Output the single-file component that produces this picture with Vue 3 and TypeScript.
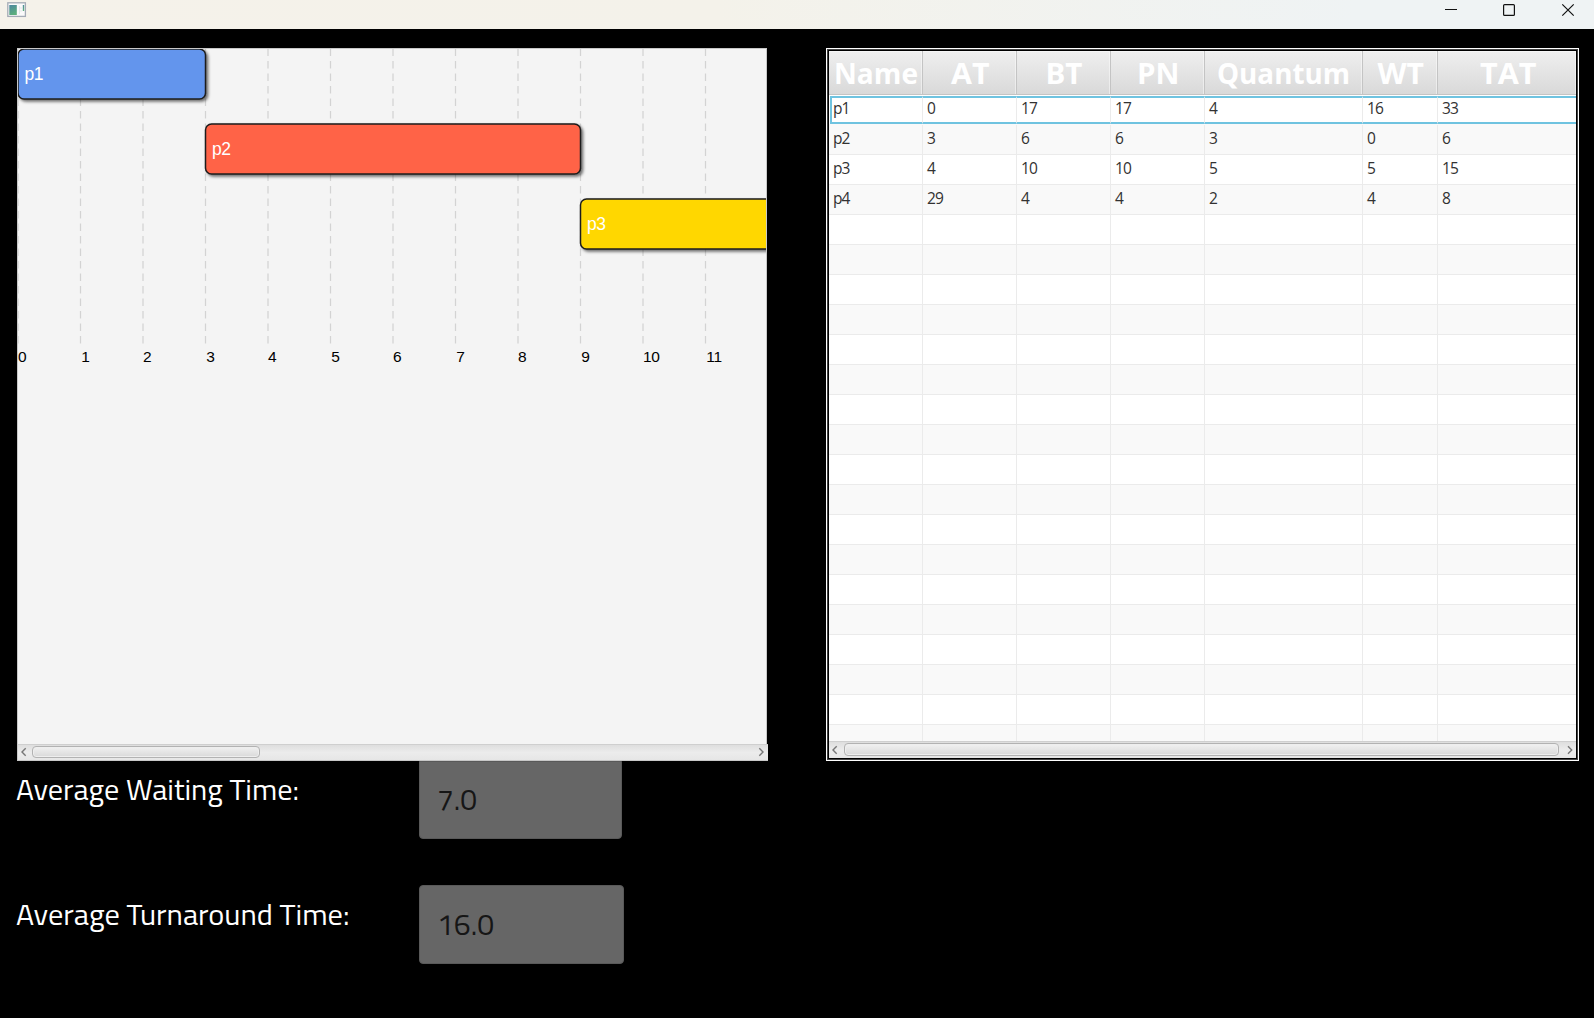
<script setup lang="ts">
interface Bar { name: string; start: number; length: number; color: string }
interface Column { title: string; width: number; textX: number; textWidth: number }

const unit = 62.5
const ticks = Array.from({ length: 12 }, (_, i) => i)
const bars: Bar[] = [
  { name: 'p1', start: 0, length: 3, color: '#6495ed' },
  { name: 'p2', start: 3, length: 6, color: '#ff6347' },
  { name: 'p3', start: 9, length: 10, color: '#ffd700' },
]

const columns: Column[] = [
  { title: 'Name', width: 94, textX: 5, textWidth: 84 },
  { title: 'AT', width: 94, textX: 28, textWidth: 38.5 },
  { title: 'BT', width: 94, textX: 28.5, textWidth: 37 },
  { title: 'PN', width: 94, textX: 26, textWidth: 42.5 },
  { title: 'Quantum', width: 158, textX: 12, textWidth: 133 },
  { title: 'WT', width: 75, textX: 14.5, textWidth: 46.5 },
  { title: 'TAT', width: 138, textX: 42, textWidth: 56.5 },
]
const gridColumns = columns.map((c) => c.width + 'px').join(' ')

const processes: (string | number)[][] = [
  ['p1', 0, 17, 17, 4, 16, 33],
  ['p2', 3, 6, 6, 3, 0, 6],
  ['p3', 4, 10, 10, 5, 5, 15],
  ['p4', 29, 4, 4, 2, 4, 8],
]
const rows = Array.from({ length: 22 }, (_, i) => processes[i] ?? columns.map(() => ''))

const averages = [
  { label: 'Average Waiting Time:', labelWidth: 283, labelY: 39, value: '7.0', valueWidth: 40, valueY: 48, kind: 'waiting' },
  { label: 'Average Turnaround Time:', labelWidth: 333.5, labelY: 40, value: '16.0', valueWidth: 57, valueY: 49, kind: 'turnaround' },
]
</script>

<template>
  <div class="window">
    <header class="titlebar">
      <svg class="app-icon" width="20" height="17" viewBox="0 0 20 17">
        <defs>
          <linearGradient id="screen" x1="0" y1="0" x2="0.4" y2="1">
            <stop offset="0" stop-color="#4c86a0" />
            <stop offset="1" stop-color="#5cae7c" />
          </linearGradient>
        </defs>
        <rect x="0.8" y="0.8" width="17.6" height="13.6" fill="#fafafa" stroke="#a4abb5" stroke-width="1.3" />
        <rect x="2.3" y="3" width="7.5" height="10" fill="url(#screen)" />
        <path d="M12.5 4v8M12 6h3M12 9h3" stroke="#e5e9ec" fill="none" />
        <rect x="15.8" y="3" width="1.4" height="6" fill="url(#screen)" />
      </svg>
      <svg class="controls" width="130" height="20" viewBox="0 0 130 20" fill="none" stroke="#111">
        <path d="M0 9.5h12" />
        <rect x="58.6" y="4.6" width="10.8" height="10.8" rx="1" stroke-width="1.2" />
        <path d="M117.3 4.3l11.4 11.4M128.7 4.3l-11.4 11.4" stroke-width="1.2" />
      </svg>
    </header>

    <main class="content">
      <section class="left">
        <div class="chart-pane">
          <svg class="chart" width="748" height="695" viewBox="0 0 748 695">
            <defs>
              <filter id="drop" x="-5%" y="-20%" width="110%" height="150%">
                <feDropShadow dx="2" dy="2" stdDeviation="1.5" flood-color="#000" flood-opacity="0.55" />
              </filter>
            </defs>
            <g class="gridlines">
              <line v-for="t in ticks" :key="t" :x1="t * unit" y1="0" :x2="t * unit" y2="294" />
            </g>
            <g class="tick-labels">
              <text v-for="t in ticks" :key="t" :x="t * unit + (t % 2 ? 0.8 : 0)" y="313">{{ t }}</text>
            </g>
            <g v-for="(b, i) in bars" :key="b.name">
              <rect
                :x="b.start * unit" :y="i * 75" :width="b.length * unit" height="50" rx="6"
                :fill="b.color" stroke="#1c1c1c" stroke-width="1.5" filter="url(#drop)"
              />
              <text class="bar-label" :x="b.start * unit + 6.5" :y="i * 75 + 31">{{ b.name }}</text>
            </g>
          </svg>
          <div class="scrollbar chart-scroll">
            <svg width="16" height="16" viewBox="0 0 16 16"><path d="M7.7 3.3L4 7l3.7 3.7" /></svg>
            <div class="thumb short"></div>
            <svg width="16" height="16" viewBox="0 0 16 16"><path d="M7.3 3.3L11 7l-3.7 3.7" /></svg>
          </div>
        </div>

        <div v-for="a in averages" :key="a.kind" class="average" :class="a.kind">
          <svg class="caption" width="402" height="78">
            <text x="-1" :y="a.labelY" :textLength="a.labelWidth" lengthAdjust="spacingAndGlyphs">{{ a.label }}</text>
          </svg>
          <div class="field">
            <svg width="100" height="76">
              <text x="0" :y="a.valueY" :textLength="a.valueWidth" lengthAdjust="spacingAndGlyphs">{{ a.value }}</text>
            </svg>
          </div>
        </div>
      </section>

      <section class="table">
        <div class="thead" :style="{ gridTemplateColumns: gridColumns }">
          <div v-for="c in columns" :key="c.title" class="th">
            <svg :width="c.width - 1" height="43">
              <text :x="c.textX" y="33" :textLength="c.textWidth" lengthAdjust="spacingAndGlyphs">{{ c.title }}</text>
            </svg>
          </div>
        </div>
        <div class="tbody">
          <div
            v-for="(r, i) in rows" :key="i" class="tr" :class="{ focused: i === 0, odd: i % 2 === 1 }"
            :style="{ gridTemplateColumns: gridColumns }"
          >
            <div v-for="(v, j) in r" :key="j" class="td">{{ v }}</div>
          </div>
        </div>
        <div class="scrollbar table-scroll">
          <svg width="15" height="16" viewBox="0 0 15 16"><path d="M7.7 4.3L4 8l3.7 3.7" /></svg>
          <div class="thumb"></div>
          <svg width="17" height="16" viewBox="0 0 17 16"><path d="M9 4.3L12.7 8 9 11.7" /></svg>
        </div>
      </section>
    </main>
  </div>
</template>

<style>
body { background: #000; overflow: hidden; }
</style>

<style scoped>
.window {
  width: 1594px;
  height: 1018px;
  background: #000;
  overflow: hidden;
}
.titlebar {
  box-sizing: border-box;
  display: flex;
  justify-content: space-between;
  height: 29px;
  padding: 0 19px 0 7px;
  background: linear-gradient(90deg, #f5f2ea 0%, #f4f2ea 45%, #eff3f4 85%, #eff3f4 100%);
}
.app-icon { margin-top: 2px; }
.content {
  display: flex;
  gap: 58px;
  padding: 19px 0 0 17px;
}
.left { width: 751px; }
.chart-pane {
  width: 750px;
  height: 713px;
}
.chart {
  display: block;
  overflow: hidden;
  border: 1px solid #c8c8c8;
  border-bottom: 0;
  background: #f4f4f4;
}
.gridlines line {
  stroke: #d3d3d3;
  stroke-width: 1.25;
  stroke-dasharray: 6.25 6.25;
  stroke-linecap: square;
}
.tick-labels text {
  font: 15.5px "Liberation Sans", sans-serif;
  letter-spacing: -0.3px;
  fill: #000;
}
.bar-label {
  font: 17.5px "Liberation Sans", sans-serif;
  letter-spacing: -0.4px;
  fill: #fff;
}
.scrollbar {
  box-sizing: border-box;
  display: flex;
  border-top: 1px solid #cfcfcf;
  background: linear-gradient(#dedede, #ececec 50%, #e6e6e6);
}
.scrollbar svg {
  flex: none;
  fill: none;
  stroke: #777;
  stroke-width: 1.4;
}
.thumb {
  box-sizing: border-box;
  flex: 1;
  border: 1px solid #b2b2b2;
  border-radius: 4px;
  background: linear-gradient(#f1f1f1, #d9d9d9);
  box-shadow: inset 0 0 0 1px #eeeeee;
}
.chart-scroll {
  justify-content: space-between;
  width: 751px;
  height: 17px;
  border-bottom: 1px solid #c8c8c8;
  border-left: 1px solid #c8c8c8;
}
.chart-scroll .thumb {
  flex: none;
  width: 228px;
  height: 12px;
  margin: 1px auto 0 -2px;
}
.average {
  display: flex;
  align-items: flex-start;
}
.turnaround { margin-top: 46px; }
.caption {
  flex: none;
  overflow: visible;
}
.caption text, .field text {
  font: 29px "Titillium Web", "Open Sans", sans-serif;
  fill: #fff;
}
.field {
  box-sizing: border-box;
  width: 203px;
  height: 78px;
  padding-left: 17px;
  border: 1px solid #595959;
  border-radius: 0 0 4px 4px;
  background: #666;
}
.field svg { display: block; }
.field text { fill: #161616; }
.turnaround .field {
  width: 205px;
  height: 79px;
  border-radius: 4px;
}
.table {
  box-sizing: border-box;
  display: flex;
  flex-direction: column;
  width: 753px;
  height: 713px;
  padding: 1px;
  border: 1px solid #fff;
  outline: 1px solid #444;
  outline-offset: -2px;
  background: #000;
}
.thead {
  display: grid;
  flex: none;
  height: 44px;
  margin: 1px 1px 0;
}
.th {
  border-right: 1px solid #c4c4c4;
  border-bottom: 1px solid #c4c4c4;
  background: linear-gradient(#efefef, #d9d9d9);
  box-shadow: inset -1px 1px 0 rgba(255, 255, 255, 0.45);
}
.th:last-child { border-right: 0; }
.th svg { display: block; }
.th text {
  font: bold 29px "Segoe UI", "Open Sans", sans-serif;
  fill: #fff;
}
.tbody {
  flex: 1;
  min-height: 0;
  margin: 0 1px;
  overflow: hidden;
  background: #fff;
}
.tr {
  box-sizing: border-box;
  display: grid;
  height: 30px;
  border-bottom: 1px solid #ebebeb;
  background: #fff;
}
.odd { background: #f9f9f9; }
.td {
  padding-left: 4px;
  border-right: 1px solid #ebebeb;
  font: 15.5px/27px "Segoe UI", "Open Sans", sans-serif;
  letter-spacing: -0.9px;
  color: #323232;
}
.td:last-child { border-right: 0; }
.focused { border-bottom-color: #f9f9f9; }
.focused .td {
  height: 24px;
  margin-top: 1px;
  border-top: 2px solid #6fc3e0;
  border-bottom: 2px solid #6fc3e0;
  line-height: 21px;
}
.focused .td:first-child {
  margin-left: 1px;
  padding-left: 1px;
  border-left: 2px solid #6fc3e0;
}
.table-scroll {
  flex: none;
  height: 17px;
  margin: 0 1px 1px;
}
.table-scroll .thumb {
  height: 13px;
  margin-top: 1px;
}
</style>
